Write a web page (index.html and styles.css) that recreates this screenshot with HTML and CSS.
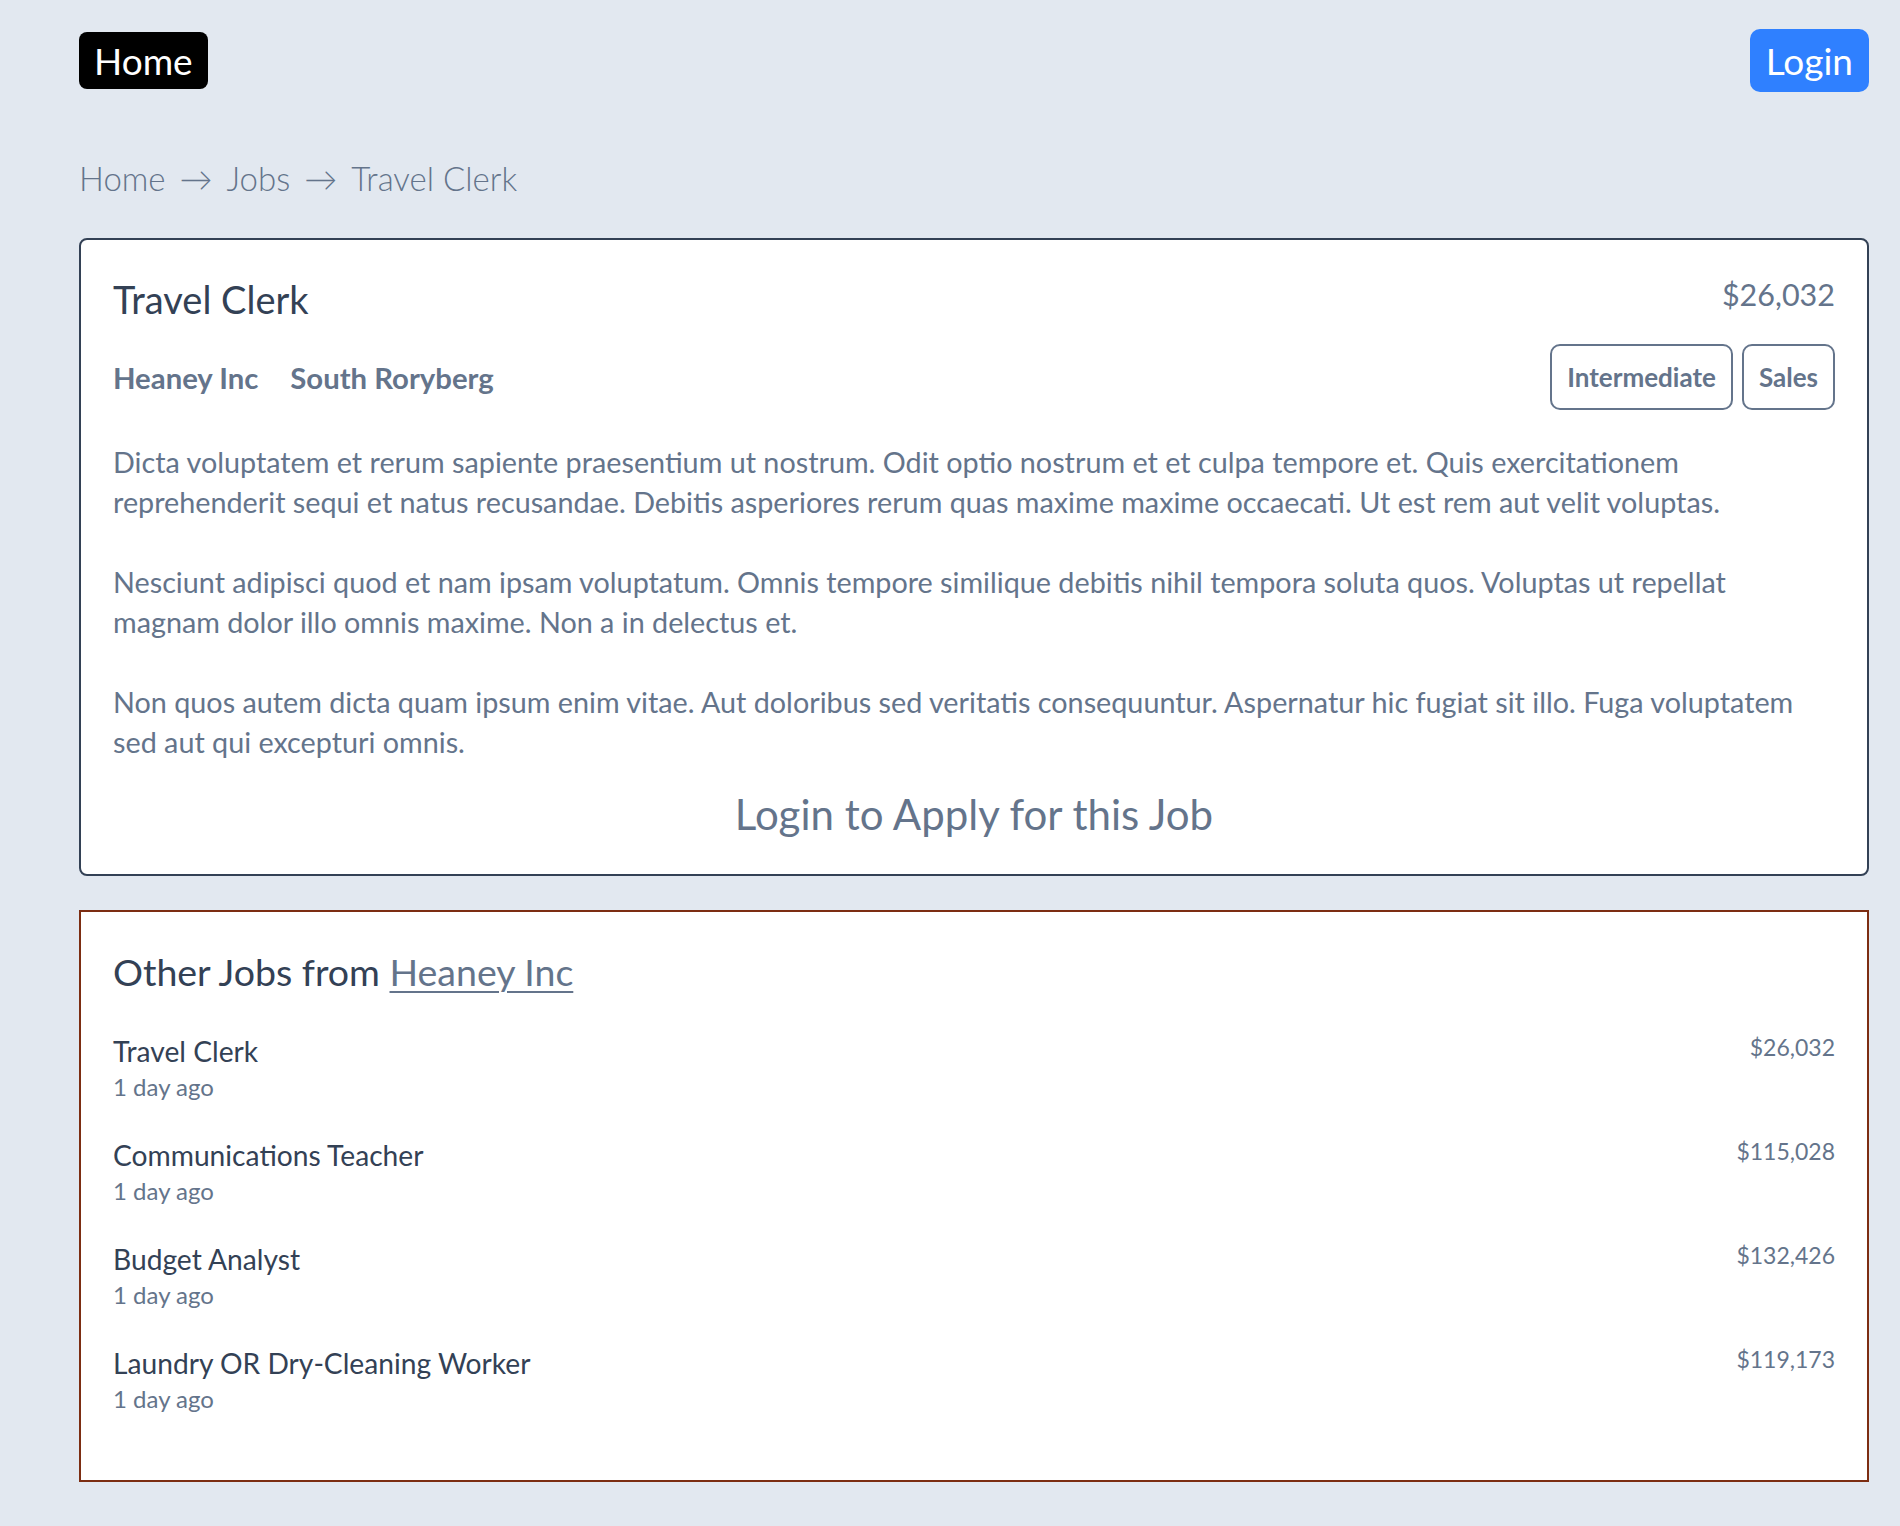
FILE: index.html
```html
<!DOCTYPE html>
<html lang="en">
<head>
<meta charset="utf-8">
<title>Travel Clerk</title>
<link rel="stylesheet" href="styles.css">
</head>
<body>
<div class="page">
  <header class="topbar">
    <a class="home-btn" href="#">Home</a>
    <a class="login-btn" href="#">Login</a>
  </header>

  <nav class="breadcrumb">
    <a href="#">Home</a><span class="arrow">→</span><a href="#">Jobs</a><span class="arrow">→</span><span>Travel Clerk</span>
  </nav>

  <section class="job-card">
    <div class="job-head">
      <h1 class="job-title">Travel Clerk</h1>
      <div class="job-salary">$26,032</div>
    </div>
    <div class="job-meta">
      <div class="meta-info">
        <span>Heaney Inc</span>
        <span>South Roryberg</span>
      </div>
      <div class="tags">
        <span class="tag">Intermediate</span>
        <span class="tag">Sales</span>
      </div>
    </div>
    <div class="job-desc">
      <p>Dicta voluptatem et rerum sapiente praesentium ut nostrum. Odit optio nostrum et et culpa tempore et. Quis exercitationem reprehenderit sequi et natus recusandae. Debitis asperiores rerum quas maxime maxime occaecati. Ut est rem aut velit voluptas.</p>
      <p>Nesciunt adipisci quod et nam ipsam voluptatum. Omnis tempore similique debitis nihil tempora soluta quos. Voluptas ut repellat magnam dolor illo omnis maxime. Non a in delectus et.</p>
      <p>Non quos autem dicta quam ipsum enim vitae. Aut doloribus sed veritatis consequuntur. Aspernatur hic fugiat sit illo. Fuga voluptatem sed aut qui excepturi omnis.</p>
    </div>
    <div class="apply">Login to Apply for this Job</div>
  </section>

  <section class="other-card">
    <h2 class="other-title">Other Jobs from <a href="#">Heaney Inc</a></h2>
    <ul class="other-list">
      <li class="other-item">
        <div class="other-main">
          <div class="other-name">Travel Clerk</div>
          <div class="other-age">1 day ago</div>
        </div>
        <div class="other-salary">$26,032</div>
      </li>
      <li class="other-item">
        <div class="other-main">
          <div class="other-name">Communications Teacher</div>
          <div class="other-age">1 day ago</div>
        </div>
        <div class="other-salary">$115,028</div>
      </li>
      <li class="other-item">
        <div class="other-main">
          <div class="other-name">Budget Analyst</div>
          <div class="other-age">1 day ago</div>
        </div>
        <div class="other-salary">$132,426</div>
      </li>
      <li class="other-item">
        <div class="other-main">
          <div class="other-name">Laundry OR Dry-Cleaning Worker</div>
          <div class="other-age">1 day ago</div>
        </div>
        <div class="other-salary">$119,173</div>
      </li>
    </ul>
  </section>
</div>
</body>
</html>
```

FILE: styles.css
```css
* {
  box-sizing: border-box;
  margin: 0;
  padding: 0;
}

body {
  background: #e2e8f0;
  font-family: Lato, "Open Sans", sans-serif;
  color: #334155;
}

a {
  color: inherit;
  text-decoration: none;
}

.page {
  padding: 29px 31px 47px 79px;
}

.topbar {
  display: flex;
  justify-content: space-between;
  align-items: center;
  height: 63px;
}

.home-btn {
  background: #000;
  color: #fff;
  font-size: 37px;
  line-height: 57px;
  padding: 0 15px;
  border-radius: 8px;
}

.login-btn {
  background: #2f80ff;
  color: #fff;
  font-size: 37px;
  line-height: 63px;
  padding: 0 16px;
  border-radius: 10px;
}

.breadcrumb {
  margin-top: 64px;
  font-size: 33px;
  line-height: 45px;
  color: #64748b;
  font-weight: 300;
}

.breadcrumb .arrow {
  margin: 0 14px;
}

.job-card {
  margin-top: 37px;
  background: #fff;
  border: 2px solid #334155;
  border-radius: 8px;
  padding: 32px;
}

.job-head {
  display: flex;
  justify-content: space-between;
  align-items: flex-start;
}

.job-title {
  font-size: 38px;
  line-height: 55px;
  font-weight: 400;
  color: #334155;
}

.job-salary {
  font-size: 30.5px;
  line-height: 45px;
  color: #64748b;
}

.job-meta {
  margin-top: 17px;
  display: flex;
  justify-content: space-between;
  align-items: center;
}

.meta-info {
  display: flex;
  gap: 32px;
  font-size: 29.3px;
  font-weight: 700;
  color: #64748b;
}

.tags {
  display: flex;
  gap: 9px;
}

.tag {
  border: 2px solid #64748b;
  border-radius: 10px;
  padding: 0 15px;
  font-size: 26px;
  line-height: 62px;
  font-weight: 700;
  color: #64748b;
}

.job-desc {
  margin-top: 32px;
  font-size: 28.75px;
  line-height: 40px;
  color: #64748b;
}

.job-desc p + p {
  margin-top: 40px;
}

.apply {
  margin-top: 24px;
  text-align: center;
  font-size: 42px;
  line-height: 56px;
  color: #64748b;
}

.other-card {
  margin-top: 34px;
  background: #fff;
  border: 2px solid #7c2d12;
  padding: 32px;
}

.other-title {
  font-size: 37.5px;
  line-height: 56px;
  font-weight: 400;
  color: #334155;
}

.other-title a {
  color: #64748b;
  text-decoration: underline;
  text-decoration-thickness: 2px;
  text-underline-offset: 5px;
}

.other-list {
  list-style: none;
  margin-top: 33px;
  padding-bottom: 31px;
  display: flex;
  flex-direction: column;
  gap: 32px;
}

.other-item {
  display: flex;
  justify-content: space-between;
  align-items: flex-start;
}

.other-name {
  font-size: 28.2px;
  line-height: 36px;
  color: #334155;
}

.other-age {
  font-size: 24px;
  line-height: 36px;
  color: #64748b;
}

.other-salary {
  font-size: 23px;
  line-height: 28px;
  color: #64748b;
}
```
